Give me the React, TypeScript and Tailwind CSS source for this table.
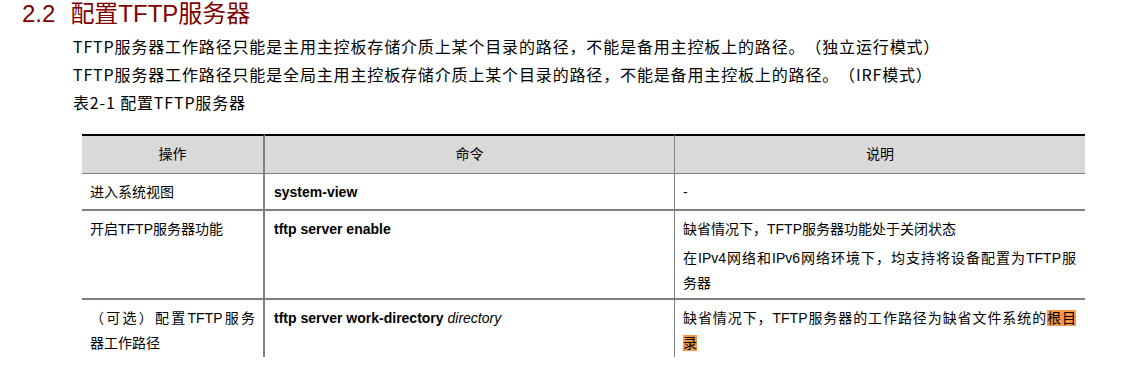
const cjk = "font-['Noto_Sans_CJK_SC',sans-serif]";

const Cell = ({
  children,
  className = "",
}: {
  children?: React.ReactNode;
  className?: string;
}) => <div className={`pt-[6px] leading-[25px] ${className}`}>{children}</div>;

const App = () => {
  return (
    <div className="w-full h-[385px] bg-white text-black overflow-hidden">
      <h1 className="pl-[22px] h-[28px] text-[24px] leading-[28px] text-[#800000] whitespace-nowrap font-['Liberation_Sans','Noto_Sans_CJK_SC',sans-serif]">
        <span>2.2</span>
        <span className="ml-[15px]">配置TFTP服务器</span>
      </h1>

      <div
        className={`mt-[4px] ml-[73px] text-[16px] leading-[28px] tracking-[0.85px] whitespace-nowrap [text-spacing-trim:space-all] ${cjk}`}
      >
        <p>TFTP服务器工作路径只能是主用主控板存储介质上某个目录的路径，不能是备用主控板上的路径。（独立运行模式）</p>
        <p>TFTP服务器工作路径只能是全局主用主控板存储介质上某个目录的路径，不能是备用主控板上的路径。（IRF模式）</p>
        <p>表2-1 配置TFTP服务器</p>
      </div>

      <div className="mt-[18px] ml-[82px] w-[1003px] grid grid-cols-[183px_410px_410px] text-[14px] font-['Liberation_Sans','Noto_Sans_CJK_SC',sans-serif]">
        {/* header */}
        <div className="h-[40px] flex items-center justify-center bg-[#d9d9d9] border-t-2 border-t-black border-b border-b-[#7f7f7f] border-r-2 border-r-[#808080]">
          操作
        </div>
        <div className="h-[40px] flex items-center justify-center bg-[#d9d9d9] border-t-2 border-t-black border-b border-b-[#7f7f7f] border-r border-r-[#808080]">
          命令
        </div>
        <div className="h-[40px] flex items-center justify-center bg-[#d9d9d9] border-t-2 border-t-black border-b border-b-[#7f7f7f]">
          说明
        </div>

        {/* system-view */}
        <Cell className="h-[37px] pl-[8px] border-b-2 border-b-[#808080] border-r-2 border-r-[#808080]">
          进入系统视图
        </Cell>
        <Cell className="h-[37px] pl-[9px] font-bold border-b-2 border-b-[#808080] border-r border-r-[#808080]">
          system-view
        </Cell>
        <Cell className="h-[37px] pl-[8px] border-b-2 border-b-[#808080]">-</Cell>

        {/* tftp server enable */}
        <Cell className="h-[89px] pl-[8px] border-b-2 border-b-[#808080] border-r-2 border-r-[#808080]">
          开启TFTP服务器功能
        </Cell>
        <Cell className="h-[89px] pl-[9px] font-bold border-b-2 border-b-[#808080] border-r border-r-[#808080]">
          tftp server enable
        </Cell>
        <Cell className="h-[89px] pl-[8px] pr-[9px] border-b-2 border-b-[#808080]">
          <p>缺省情况下，TFTP服务器功能处于关闭状态</p>
          <p className="mt-[4px] [text-align-last:justify]">在IPv4网络和IPv6网络环境下，均支持将设备配置为TFTP服</p>
          <p>务器</p>
        </Cell>

        {/* work-directory */}
        <Cell className="h-[57px] pl-[8px] pr-[8px] border-r-2 border-r-[#808080]">
          <p className="[text-align-last:justify]">（可选）配置TFTP服务</p>
          <p>器工作路径</p>
        </Cell>
        <Cell className="h-[57px] pl-[9px] border-r border-r-[#808080]">
          <span className="font-bold">tftp server work-directory</span>{" "}
          <span className="italic">directory</span>
        </Cell>
        <Cell className="h-[57px] pl-[8px] pr-[9px]">
          <p className="[text-align-last:justify]">
            缺省情况下，TFTP服务器的工作路径为缺省文件系统的
            <span className="bg-[#f79646]">根目</span>
          </p>
          <p>
            <span className="bg-[#f79646]">录</span>
          </p>
        </Cell>
      </div>
    </div>
  );
};

export default App;
